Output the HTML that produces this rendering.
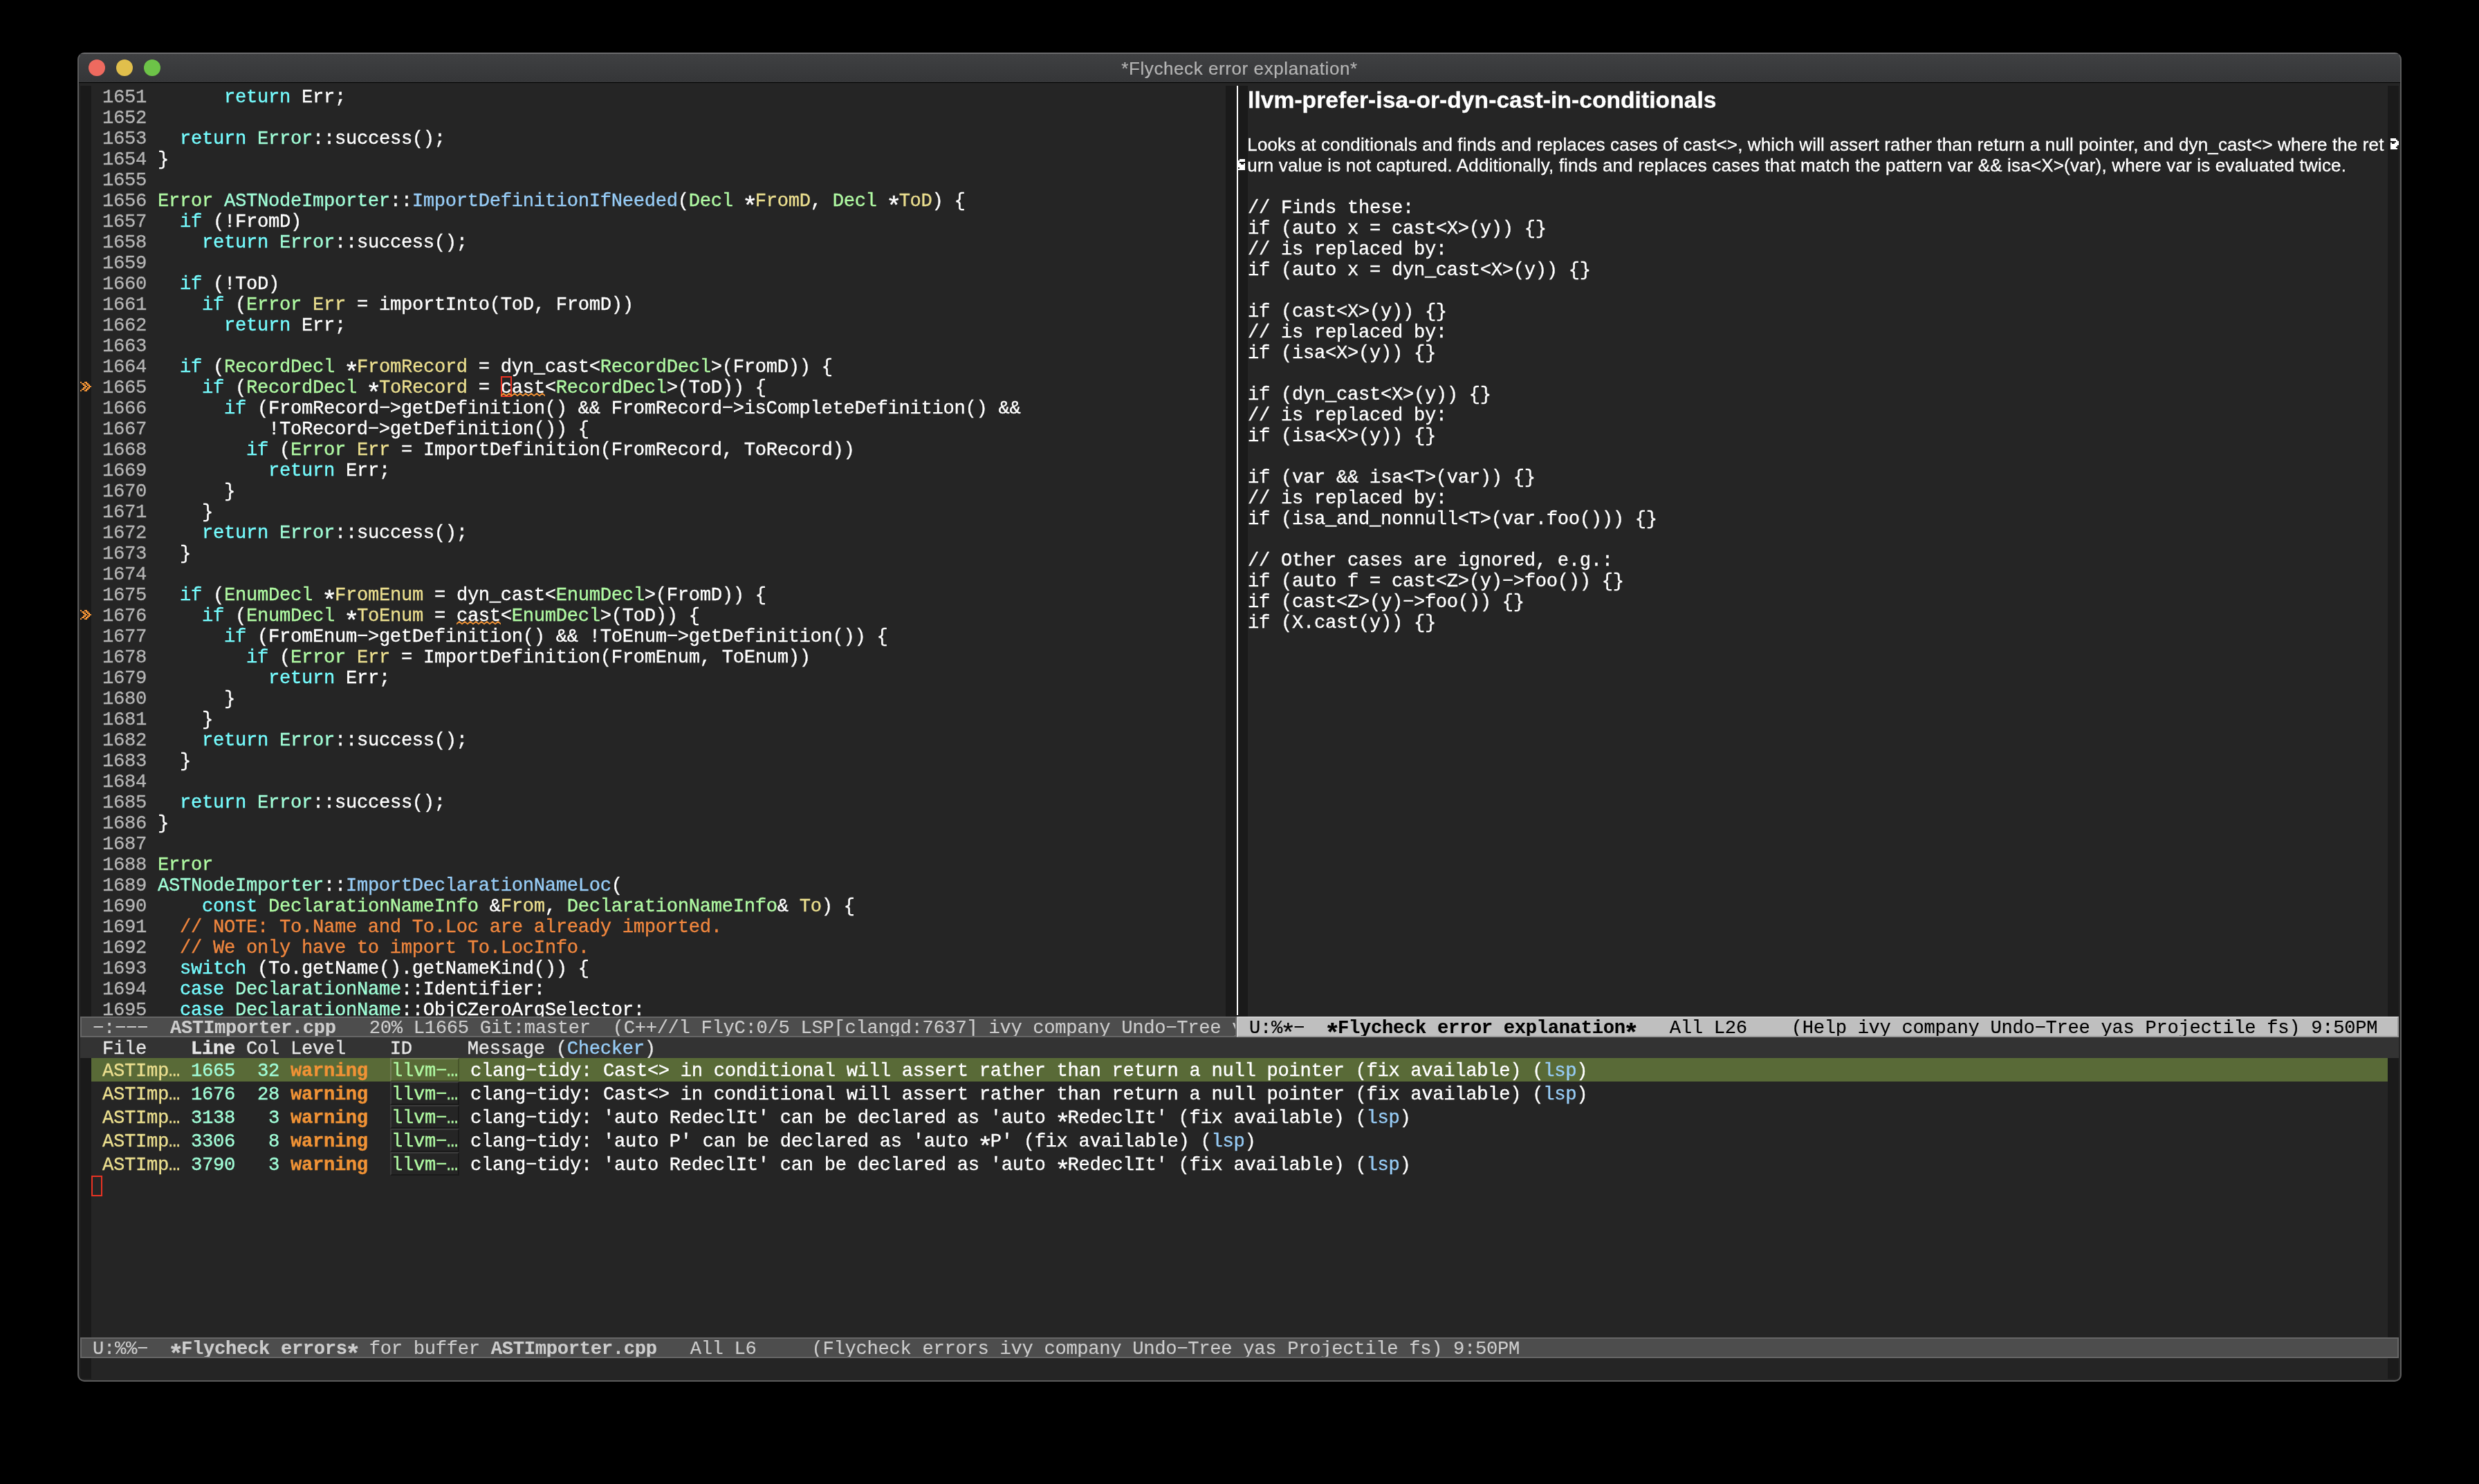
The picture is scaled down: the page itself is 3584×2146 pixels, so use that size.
<!DOCTYPE html>
<html><head><meta charset="utf-8"><title>*Flycheck error explanation*</title>
<style>
html,body{margin:0;padding:0;background:#000;}
body{width:3584px;height:2146px;position:relative;overflow:hidden;font-family:"Liberation Mono",monospace;}
.abs{position:absolute;}
#win{position:absolute;left:112px;top:76px;width:3360px;height:1922px;border-radius:10px;background:#252525;overflow:hidden;}
#frame{position:absolute;left:112px;top:76px;width:3360px;height:1922px;border-radius:10px;box-sizing:border-box;border:2px solid #5c5c5c;border-top-color:transparent;pointer-events:none;}
#tb{position:absolute;left:0;top:0;width:3360px;height:43px;background:linear-gradient(#3f4042,#353638);border-top:2px solid #6b6b6d;box-sizing:border-box;}
#tbl{position:absolute;left:0;top:43px;width:3360px;height:1px;background:#000;}
.tl{position:absolute;top:10px;width:24px;height:24px;border-radius:12px;}
#title{position:absolute;left:0;top:1px;width:3360px;height:44px;line-height:44px;text-align:center;font-family:"Liberation Sans",sans-serif;font-size:26px;letter-spacing:0.58px;color:#b4b4b4;white-space:pre;-webkit-text-stroke:0.2px #b4b4b4;}
.m{position:absolute;font-family:"Liberation Mono",monospace;font-size:27.2px;letter-spacing:-0.32266px;line-height:30px;height:30px;white-space:pre;color:#fff;-webkit-text-stroke:0.35px currentColor;}
.m b{font-weight:bold;}
.k{color:#75fbfd}.t{color:#aff9a2}.c{color:#a0fcd6}.f{color:#97ccf6}.v{color:#ebde8e}.mm,.m .m{color:#ef863e}.w{color:#f09235}
.ln{color:#b3b3b3}
.as{display:inline-block;width:16px;letter-spacing:0;text-align:center;transform:translateY(9.3px) scale(1.38);}
.fr{position:absolute;background:#1a1a1a;}
.s{position:absolute;font-family:"Liberation Sans",sans-serif;white-space:pre;color:#fff;-webkit-text-stroke:0.3px #fff;}
.mli{position:absolute;height:30px;box-sizing:border-box;background:#4d4d4d;border:2px solid #666;overflow:hidden;}
.mli .m{color:#ccc;top:0px;left:0;-webkit-text-stroke:0.15px currentColor;}
.mla{position:absolute;height:30px;box-sizing:border-box;background:#bfbfbf;border:2px solid;border-color:#cfcfcf #9b9b9b #9b9b9b #cfcfcf;overflow:hidden;}
.mla .m{color:#000;top:0px;left:0;-webkit-text-stroke:0.15px currentColor;}
.idb{position:absolute;width:100px;height:34px;box-sizing:border-box;border:2px solid;border-color:#3c3c3c #191919 #191919 #3c3c3c;}
.idb.h{border-color:#737f57 #465429 #465429 #737f57;}
</style></head><body><div id="root" style="position:absolute;left:0;top:0;width:3584px;height:2146px;will-change:transform">

<div id="win">
<div id="tb"></div><div id="tbl"></div>
<div class="tl" style="left:16px;background:#ee6a5f"></div><div class="tl" style="left:56px;background:#e1bf4c"></div><div class="tl" style="left:96px;background:#6dc348"></div>
<div id="title">*Flycheck error explanation*</div>
</div>
<div class="fr" style="left:116px;top:124px;width:16px;height:1346px"></div>
<div class="fr" style="left:1772px;top:124px;width:32px;height:1346px"></div>
<div class="fr" style="left:3452px;top:124px;width:16px;height:1346px"></div>
<div class="abs" style="left:1788px;top:124px;width:2px;height:1344px;background:#fff"></div>
<div class="fr" style="left:116px;top:1530px;width:16px;height:404px"></div>
<div class="fr" style="left:3452px;top:1530px;width:16px;height:404px"></div>
<div class="fr" style="left:116px;top:1964px;width:16px;height:30px"></div>
<div class="fr" style="left:3452px;top:1964px;width:16px;height:30px"></div>
<div class="abs" style="left:132px;top:124px;width:1640px;height:1346px;overflow:hidden">
<div class="m ln" style="left:16px;top:2px">1651</div>
<div class="m" style="left:96px;top:2px">      <span class="k">return</span> Err;</div>
<div class="m ln" style="left:16px;top:32px">1652</div>
<div class="m ln" style="left:16px;top:62px">1653</div>
<div class="m" style="left:96px;top:62px">  <span class="k">return</span> <span class="c">Error</span>::success();</div>
<div class="m ln" style="left:16px;top:92px">1654</div>
<div class="m" style="left:96px;top:92px">}</div>
<div class="m ln" style="left:16px;top:122px">1655</div>
<div class="m ln" style="left:16px;top:152px">1656</div>
<div class="m" style="left:96px;top:152px"><span class="t">Error</span> <span class="c">ASTNodeImporter</span>::<span class="f">ImportDefinitionIfNeeded</span>(<span class="t">Decl</span> <span class="as">*</span><span class="v">FromD</span>, <span class="t">Decl</span> <span class="as">*</span><span class="v">ToD</span>) {</div>
<div class="m ln" style="left:16px;top:182px">1657</div>
<div class="m" style="left:96px;top:182px">  <span class="k">if</span> (!FromD)</div>
<div class="m ln" style="left:16px;top:212px">1658</div>
<div class="m" style="left:96px;top:212px">    <span class="k">return</span> <span class="c">Error</span>::success();</div>
<div class="m ln" style="left:16px;top:242px">1659</div>
<div class="m ln" style="left:16px;top:272px">1660</div>
<div class="m" style="left:96px;top:272px">  <span class="k">if</span> (!ToD)</div>
<div class="m ln" style="left:16px;top:302px">1661</div>
<div class="m" style="left:96px;top:302px">    <span class="k">if</span> (<span class="t">Error</span> <span class="v">Err</span> = importInto(ToD, FromD))</div>
<div class="m ln" style="left:16px;top:332px">1662</div>
<div class="m" style="left:96px;top:332px">      <span class="k">return</span> Err;</div>
<div class="m ln" style="left:16px;top:362px">1663</div>
<div class="m ln" style="left:16px;top:392px">1664</div>
<div class="m" style="left:96px;top:392px">  <span class="k">if</span> (<span class="t">RecordDecl</span> <span class="as">*</span><span class="v">FromRecord</span> = dyn_cast&lt;<span class="t">RecordDecl</span>&gt;(FromD)) {</div>
<div class="m ln" style="left:16px;top:422px">1665</div>
<div class="m" style="left:96px;top:422px">    <span class="k">if</span> (<span class="t">RecordDecl</span> <span class="as">*</span><span class="v">ToRecord</span> = cast&lt;<span class="t">RecordDecl</span>&gt;(ToD)) {</div>
<div class="m ln" style="left:16px;top:452px">1666</div>
<div class="m" style="left:96px;top:452px">      <span class="k">if</span> (FromRecord−&gt;getDefinition() &amp;&amp; FromRecord−&gt;isCompleteDefinition() &amp;&amp;</div>
<div class="m ln" style="left:16px;top:482px">1667</div>
<div class="m" style="left:96px;top:482px">          !ToRecord−&gt;getDefinition()) {</div>
<div class="m ln" style="left:16px;top:512px">1668</div>
<div class="m" style="left:96px;top:512px">        <span class="k">if</span> (<span class="t">Error</span> <span class="v">Err</span> = ImportDefinition(FromRecord, ToRecord))</div>
<div class="m ln" style="left:16px;top:542px">1669</div>
<div class="m" style="left:96px;top:542px">          <span class="k">return</span> Err;</div>
<div class="m ln" style="left:16px;top:572px">1670</div>
<div class="m" style="left:96px;top:572px">      }</div>
<div class="m ln" style="left:16px;top:602px">1671</div>
<div class="m" style="left:96px;top:602px">    }</div>
<div class="m ln" style="left:16px;top:632px">1672</div>
<div class="m" style="left:96px;top:632px">    <span class="k">return</span> <span class="c">Error</span>::success();</div>
<div class="m ln" style="left:16px;top:662px">1673</div>
<div class="m" style="left:96px;top:662px">  }</div>
<div class="m ln" style="left:16px;top:692px">1674</div>
<div class="m ln" style="left:16px;top:722px">1675</div>
<div class="m" style="left:96px;top:722px">  <span class="k">if</span> (<span class="t">EnumDecl</span> <span class="as">*</span><span class="v">FromEnum</span> = dyn_cast&lt;<span class="t">EnumDecl</span>&gt;(FromD)) {</div>
<div class="m ln" style="left:16px;top:752px">1676</div>
<div class="m" style="left:96px;top:752px">    <span class="k">if</span> (<span class="t">EnumDecl</span> <span class="as">*</span><span class="v">ToEnum</span> = cast&lt;<span class="t">EnumDecl</span>&gt;(ToD)) {</div>
<div class="m ln" style="left:16px;top:782px">1677</div>
<div class="m" style="left:96px;top:782px">      <span class="k">if</span> (FromEnum−&gt;getDefinition() &amp;&amp; !ToEnum−&gt;getDefinition()) {</div>
<div class="m ln" style="left:16px;top:812px">1678</div>
<div class="m" style="left:96px;top:812px">        <span class="k">if</span> (<span class="t">Error</span> <span class="v">Err</span> = ImportDefinition(FromEnum, ToEnum))</div>
<div class="m ln" style="left:16px;top:842px">1679</div>
<div class="m" style="left:96px;top:842px">          <span class="k">return</span> Err;</div>
<div class="m ln" style="left:16px;top:872px">1680</div>
<div class="m" style="left:96px;top:872px">      }</div>
<div class="m ln" style="left:16px;top:902px">1681</div>
<div class="m" style="left:96px;top:902px">    }</div>
<div class="m ln" style="left:16px;top:932px">1682</div>
<div class="m" style="left:96px;top:932px">    <span class="k">return</span> <span class="c">Error</span>::success();</div>
<div class="m ln" style="left:16px;top:962px">1683</div>
<div class="m" style="left:96px;top:962px">  }</div>
<div class="m ln" style="left:16px;top:992px">1684</div>
<div class="m ln" style="left:16px;top:1022px">1685</div>
<div class="m" style="left:96px;top:1022px">  <span class="k">return</span> <span class="c">Error</span>::success();</div>
<div class="m ln" style="left:16px;top:1052px">1686</div>
<div class="m" style="left:96px;top:1052px">}</div>
<div class="m ln" style="left:16px;top:1082px">1687</div>
<div class="m ln" style="left:16px;top:1112px">1688</div>
<div class="m" style="left:96px;top:1112px"><span class="t">Error</span></div>
<div class="m ln" style="left:16px;top:1142px">1689</div>
<div class="m" style="left:96px;top:1142px"><span class="c">ASTNodeImporter</span>::<span class="f">ImportDeclarationNameLoc</span>(</div>
<div class="m ln" style="left:16px;top:1172px">1690</div>
<div class="m" style="left:96px;top:1172px">    <span class="k">const</span> <span class="t">DeclarationNameInfo</span> &amp;<span class="v">From</span>, <span class="t">DeclarationNameInfo</span>&amp; <span class="v">To</span>) {</div>
<div class="m ln" style="left:16px;top:1202px">1691</div>
<div class="m" style="left:96px;top:1202px">  <span class="mm">// NOTE: To.Name and To.Loc are already imported.</span></div>
<div class="m ln" style="left:16px;top:1232px">1692</div>
<div class="m" style="left:96px;top:1232px">  <span class="mm">// We only have to import To.LocInfo.</span></div>
<div class="m ln" style="left:16px;top:1262px">1693</div>
<div class="m" style="left:96px;top:1262px">  <span class="k">switch</span> (To.getName().getNameKind()) {</div>
<div class="m ln" style="left:16px;top:1292px">1694</div>
<div class="m" style="left:96px;top:1292px">  <span class="k">case</span> <span class="c">DeclarationName</span>::Identifier:</div>
<div class="m ln" style="left:16px;top:1322px">1695</div>
<div class="m" style="left:96px;top:1322px">  <span class="k">case</span> <span class="c">DeclarationName</span>::ObjCZeroArgSelector:</div>
</div>
<div class="abs" style="left:724px;top:544px;width:16px;height:30px;box-sizing:border-box;border:2px solid #ea3323"></div>
<svg class="abs" style="left:724px;top:568px" width="64" height="6"><polyline points="0,4.2 4,1 8,4.2 12,1 16,4.2 20,1 24,4.2 28,1 32,4.2 36,1 40,4.2 44,1 48,4.2 52,1 56,4.2 60,1 64,4.2" fill="none" stroke="#f09235" stroke-width="1.8" stroke-linejoin="round" stroke-linecap="round"/></svg>
<svg class="abs" style="left:660px;top:898px" width="64" height="6"><polyline points="0,4.2 4,1 8,4.2 12,1 16,4.2 20,1 24,4.2 28,1 32,4.2 36,1 40,4.2 44,1 48,4.2 52,1 56,4.2 60,1 64,4.2" fill="none" stroke="#f09235" stroke-width="1.8" stroke-linejoin="round" stroke-linecap="round"/></svg>
<svg class="abs" style="left:116px;top:552px" width="16" height="14" fill="#f09235" shape-rendering="crispEdges"><rect x="0" y="0" width="2" height="2"/><rect x="6" y="0" width="4" height="2"/><rect x="2" y="2" width="4" height="2"/><rect x="8" y="2" width="4" height="2"/><rect x="4" y="4" width="4" height="2"/><rect x="10" y="4" width="4" height="2"/><rect x="6" y="6" width="4" height="2"/><rect x="12" y="6" width="4" height="2"/><rect x="4" y="8" width="4" height="2"/><rect x="10" y="8" width="4" height="2"/><rect x="2" y="10" width="4" height="2"/><rect x="8" y="10" width="4" height="2"/><rect x="0" y="12" width="2" height="2"/><rect x="6" y="12" width="4" height="2"/></svg>
<svg class="abs" style="left:116px;top:882px" width="16" height="14" fill="#f09235" shape-rendering="crispEdges"><rect x="0" y="0" width="2" height="2"/><rect x="6" y="0" width="4" height="2"/><rect x="2" y="2" width="4" height="2"/><rect x="8" y="2" width="4" height="2"/><rect x="4" y="4" width="4" height="2"/><rect x="10" y="4" width="4" height="2"/><rect x="6" y="6" width="4" height="2"/><rect x="12" y="6" width="4" height="2"/><rect x="4" y="8" width="4" height="2"/><rect x="10" y="8" width="4" height="2"/><rect x="2" y="10" width="4" height="2"/><rect x="8" y="10" width="4" height="2"/><rect x="0" y="12" width="2" height="2"/><rect x="6" y="12" width="4" height="2"/></svg>
<div class="s" id="h1" style="left:1804px;top:124.5px;height:40px;line-height:40px;font-weight:bold;font-size:33.6px;letter-spacing:0.05px">llvm-prefer-isa-or-dyn-cast-in-conditionals</div>
<div class="s" id="p1" style="left:1803.3px;top:193.6px;height:30px;line-height:30px;font-size:26px;letter-spacing:0.131px">Looks at conditionals and finds and replaces cases of cast&lt;&gt;, which will assert rather than return a null pointer, and dyn_cast&lt;&gt; where the ret</div>
<div class="s" id="p2" style="left:1803.3px;top:223.6px;height:30px;line-height:30px;font-size:26px;letter-spacing:0.175px">urn value is not captured. Additionally, finds and replaces cases that match the pattern var &amp;&amp; isa&lt;X&gt;(var), where var is evaluated twice.</div>
<div class="m " style="left:1804px;top:286px;">// Finds these:</div>
<div class="m " style="left:1804px;top:316px;">if (auto x = cast&lt;X&gt;(y)) {}</div>
<div class="m " style="left:1804px;top:346px;">// is replaced by:</div>
<div class="m " style="left:1804px;top:376px;">if (auto x = dyn_cast&lt;X&gt;(y)) {}</div>
<div class="m " style="left:1804px;top:436px;">if (cast&lt;X&gt;(y)) {}</div>
<div class="m " style="left:1804px;top:466px;">// is replaced by:</div>
<div class="m " style="left:1804px;top:496px;">if (isa&lt;X&gt;(y)) {}</div>
<div class="m " style="left:1804px;top:556px;">if (dyn_cast&lt;X&gt;(y)) {}</div>
<div class="m " style="left:1804px;top:586px;">// is replaced by:</div>
<div class="m " style="left:1804px;top:616px;">if (isa&lt;X&gt;(y)) {}</div>
<div class="m " style="left:1804px;top:676px;">if (var &amp;&amp; isa&lt;T&gt;(var)) {}</div>
<div class="m " style="left:1804px;top:706px;">// is replaced by:</div>
<div class="m " style="left:1804px;top:736px;">if (isa_and_nonnull&lt;T&gt;(var.foo())) {}</div>
<div class="m " style="left:1804px;top:796px;">// Other cases are ignored, e.g.:</div>
<div class="m " style="left:1804px;top:826px;">if (auto f = cast&lt;Z&gt;(y)−&gt;foo()) {}</div>
<div class="m " style="left:1804px;top:856px;">if (cast&lt;Z&gt;(y)−&gt;foo()) {}</div>
<div class="m " style="left:1804px;top:886px;">if (X.cast(y)) {}</div>
<svg class="abs" style="left:3452px;top:200px" width="16" height="16" fill="#fff" shape-rendering="crispEdges"><rect x="4" y="0" width="8" height="2"/><rect x="4" y="2" width="10" height="2"/><rect x="12" y="4" width="4" height="2"/><rect x="4" y="6" width="2" height="2"/><rect x="10" y="6" width="6" height="2"/><rect x="4" y="8" width="12" height="2"/><rect x="4" y="10" width="10" height="2"/><rect x="4" y="12" width="8" height="2"/><rect x="4" y="14" width="10" height="2"/></svg>
<svg class="abs" style="left:1788px;top:230px" width="16" height="16" fill="#fff" shape-rendering="crispEdges"><rect x="4" y="0" width="8" height="2"/><rect x="2" y="2" width="10" height="2"/><rect x="0" y="4" width="4" height="2"/><rect x="0" y="6" width="6" height="2"/><rect x="10" y="6" width="2" height="2"/><rect x="0" y="8" width="12" height="2"/><rect x="2" y="10" width="10" height="2"/><rect x="4" y="12" width="8" height="2"/><rect x="2" y="14" width="10" height="2"/></svg>
<div class="abs" style="left:1788px;top:228px;width:2px;height:20px;background:#fff"></div>
<div class="mli" style="left:116px;top:1470px;width:1672px"><div class="m"> −:−−−  <b>ASTImporter.cpp</b>   20% L1665 Git:master  (C++//l FlyC:0/5 LSP[clangd:7637] ivy company Undo−Tree yas Projectile fs) 9:50PM</div></div>
<div class="mla" style="left:1788px;top:1470px;width:1680px"><div class="m"> U:%<span class="as">*</span>−  <b><span class="as">*</span>Flycheck error explanation<span class="as">*</span></b>   All L26    (Help ivy company Undo−Tree yas Projectile fs) 9:50PM</div></div>
<div class="abs" style="left:116px;top:1500px;width:3352px;height:30px;background:#333"></div>
<div class="m " style="left:132px;top:1502px;color:#e5e5e5"> File    <b>Line</b> Col Level    ID     Message (<span class="f">Checker</span>)</div>
<div class="abs" style="left:132px;top:1530px;width:3320px;height:34px;background:#596a37"></div>
<div class="m " style="left:132px;top:1534px;"> <span class="v">ASTImp…</span> <span class="c">1665  32</span> <b class="w">warning</b></div>
<div class="idb h" style="left:564px;top:1530px"></div>
<div class="m " style="left:566px;top:1534px;"><span class="t">llvm−…</span></div>
<div class="m " style="left:680px;top:1534px;">clang−tidy: Cast&lt;&gt; in conditional will assert rather than return a null pointer (fix available) (<span class="f">lsp</span>)</div>
<div class="m " style="left:132px;top:1568px;"> <span class="v">ASTImp…</span> <span class="c">1676  28</span> <b class="w">warning</b></div>
<div class="idb" style="left:564px;top:1564px"></div>
<div class="m " style="left:566px;top:1568px;"><span class="t">llvm−…</span></div>
<div class="m " style="left:680px;top:1568px;">clang−tidy: Cast&lt;&gt; in conditional will assert rather than return a null pointer (fix available) (<span class="f">lsp</span>)</div>
<div class="m " style="left:132px;top:1602px;"> <span class="v">ASTImp…</span> <span class="c">3138   3</span> <b class="w">warning</b></div>
<div class="idb" style="left:564px;top:1598px"></div>
<div class="m " style="left:566px;top:1602px;"><span class="t">llvm−…</span></div>
<div class="m " style="left:680px;top:1602px;">clang−tidy: 'auto RedeclIt' can be declared as 'auto <span class="as">*</span>RedeclIt' (fix available) (<span class="f">lsp</span>)</div>
<div class="m " style="left:132px;top:1636px;"> <span class="v">ASTImp…</span> <span class="c">3306   8</span> <b class="w">warning</b></div>
<div class="idb" style="left:564px;top:1632px"></div>
<div class="m " style="left:566px;top:1636px;"><span class="t">llvm−…</span></div>
<div class="m " style="left:680px;top:1636px;">clang−tidy: 'auto P' can be declared as 'auto <span class="as">*</span>P' (fix available) (<span class="f">lsp</span>)</div>
<div class="m " style="left:132px;top:1670px;"> <span class="v">ASTImp…</span> <span class="c">3790   3</span> <b class="w">warning</b></div>
<div class="idb" style="left:564px;top:1666px"></div>
<div class="m " style="left:566px;top:1670px;"><span class="t">llvm−…</span></div>
<div class="m " style="left:680px;top:1670px;">clang−tidy: 'auto RedeclIt' can be declared as 'auto <span class="as">*</span>RedeclIt' (fix available) (<span class="f">lsp</span>)</div>
<div class="abs" style="left:132px;top:1700px;width:16px;height:30px;box-sizing:border-box;border:2px solid #ea3323"></div>
<div class="mli" style="left:116px;top:1934px;width:3352px"><div class="m"> U:%%−  <b><span class="as">*</span>Flycheck errors<span class="as">*</span></b> for buffer <b>ASTImporter.cpp</b>   All L6     (Flycheck errors ivy company Undo−Tree yas Projectile fs) 9:50PM</div></div>
<div id="frame"></div>
</div></body></html>
